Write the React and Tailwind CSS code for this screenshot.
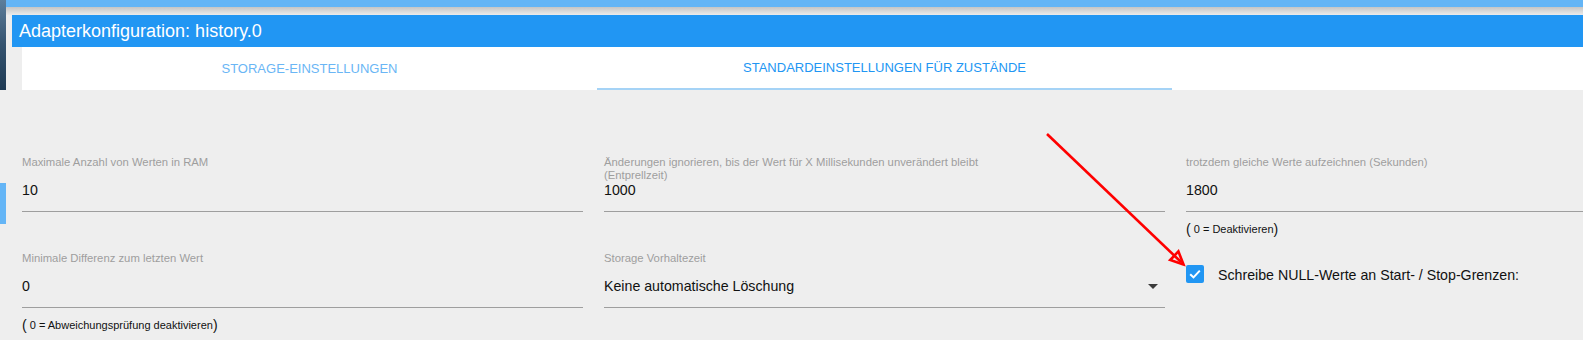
import React from "react";

const font = { fontFamily: '"Liberation Sans", Arial, sans-serif' };

function Field({ label, value, select }) {
  return (
    <div className="flex flex-col">
      <div className="h-[25px] text-[11.3px] leading-[13px] text-[#9e9e9e]">{label}</div>
      <div className="h-[31px] border-b border-[#9e9e9e]">
        <div className="flex h-[18px] items-center justify-between pr-[7px] text-[14.2px] leading-[18px] text-[#111]">
          <span>{value}</span>
          {select && (
            <svg width="10" height="5" viewBox="0 0 10 5" aria-hidden="true">
              <path d="M0 0 L10 0 L5 5 Z" fill="#3a3a3a" />
            </svg>
          )}
        </div>
      </div>
    </div>
  );
}

function Helper({ children }) {
  return (
    <div className="mt-[7px] flex h-[20px] items-center text-[#111]">
      <span className="text-[14px]">(</span>
      <span className="text-[11px]">&nbsp;{children}</span>
      <span className="text-[14px]">)</span>
    </div>
  );
}

export default function App() {
  return (
    <div className="relative flex h-[340px] w-full overflow-hidden bg-[#eeeeee]" style={font}>
      {/* window edge behind the dialog */}
      <div className="flex w-[6px] shrink-0 flex-col">
        <div className="h-[90px] bg-gradient-to-b from-[#5d7e9b] via-[#34536f] to-[#1f3a54]" />
        <div className="h-[93px]" />
        <div className="h-[41px] bg-[#64b5f6]" />
      </div>

      <div className="flex min-w-0 flex-1 flex-col">
        <div className="h-[7px] bg-[#64b5f6]" />
        <div className="h-[8px] bg-gradient-to-b from-[#c6c6c6] to-[#ebebeb]" />

        <div className="ml-[6px] flex h-[32px] items-center bg-[#2196f3] pl-[7px] text-[18px] text-white">
          Adapterkonfiguration: history.0
        </div>

        <div className="ml-[16px] flex h-[43px] bg-white text-[13px] uppercase">
          <div className="flex w-[575px] items-center justify-center text-[#6ab6f5]">Storage-Einstellungen</div>
          <div className="flex w-[575px] flex-col">
            <div className="flex flex-1 items-center justify-center text-[#2196f3]">Standardeinstellungen für Zustände</div>
            <div className="h-[2px] bg-[#a5d3f6]" />
          </div>
        </div>

        <div className="grid grid-cols-[561px_561px_1fr] gap-x-[21px] pl-[16px] pt-[66px]">
          <div className="flex flex-col">
            <Field label="Maximale Anzahl von Werten in RAM" value="10" />
            <div className="mt-[40px]">
              <Field label="Minimale Differenz zum letzten Wert" value="0" />
            </div>
            <Helper>0 = Abweichungsprüfung deaktivieren</Helper>
          </div>

          <div className="flex flex-col">
            <Field
              label={
                <>
                  Änderungen ignorieren, bis der Wert für X Millisekunden unverändert bleibt
                  <br />
                  (Entprellzeit)
                </>
              }
              value="1000"
            />
            <div className="mt-[40px]">
              <Field label="Storage Vorhaltezeit" value="Keine automatische Löschung" select />
            </div>
          </div>

          <div className="flex flex-col">
            <Field label="trotzdem gleiche Werte aufzeichnen (Sekunden)" value="1800" />
            <Helper>0 = Deaktivieren</Helper>
            <div className="mt-[26px] flex h-[18px] items-center gap-[14px]">
              <span className="flex h-[18px] w-[18px] items-center justify-center rounded-[2px] bg-[#2196f3]">
                <svg width="14" height="14" viewBox="0 0 14 14" aria-hidden="true">
                  <path d="M2.2 7.2 L5.5 10.4 L11.8 3.6" fill="none" stroke="#fff" strokeWidth="2" />
                </svg>
              </span>
              <span className="pt-[3px] text-[14.2px] text-[#111]">Schreibe NULL-Werte an Start- / Stop-Grenzen:</span>
            </div>
          </div>
        </div>
      </div>

      {/* red annotation arrow */}
      <svg className="pointer-events-none absolute left-0 top-0" width="1583" height="340" aria-hidden="true">
        <line x1="1047" y1="134" x2="1181" y2="262" stroke="#ff0000" strokeWidth="2.6" />
        <path d="M1183.5 264.5 L1170.2 260 L1178.4 251.4 Z" fill="none" stroke="#ff0000" strokeWidth="2.6" strokeLinejoin="miter" />
      </svg>
    </div>
  );
}
